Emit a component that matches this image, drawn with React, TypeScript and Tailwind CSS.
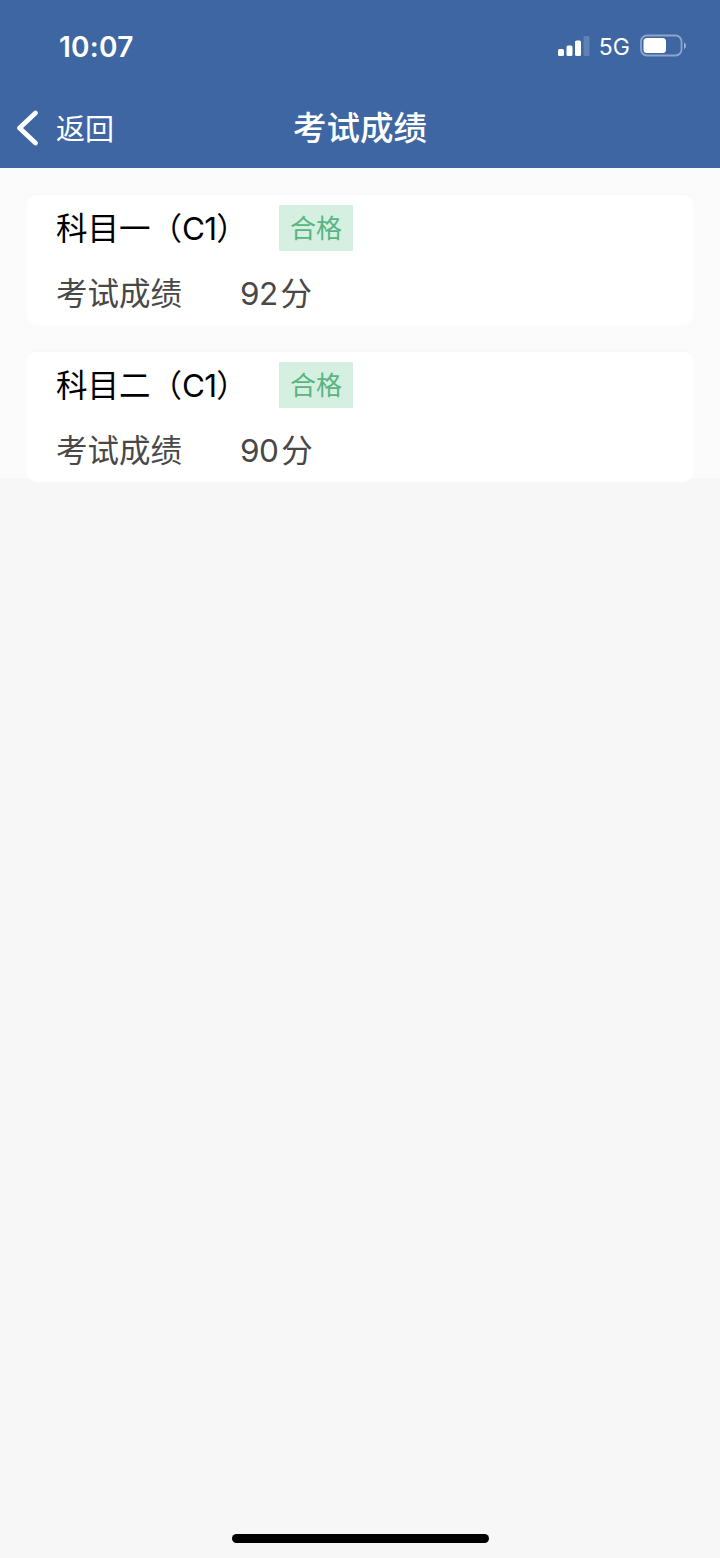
interface ExamResult {
  subject: string;
  license: string;
  score: number;
  status: string;
}

const results: ExamResult[] = [
  { subject: "科目一", license: "C1", score: 92, status: "合格" },
  { subject: "科目二", license: "C1", score: 90, status: "合格" },
];

const StatusBar = () => (
  <div className="flex h-[92px] items-center justify-between pl-[59px] pr-[33px] text-white">
    <div className="pt-px text-[28px] leading-none font-semibold tracking-[0.25px]">
      10:07
    </div>
    <div className="flex items-center">
      <svg
        className="overflow-visible"
        width="32"
        height="20"
        viewBox="0 0 32 20"
        fill="currentColor"
      >
        <rect x="1" y="13" width="6" height="7" rx="1.5" />
        <rect x="9.5" y="9.5" width="6" height="10.5" rx="1.5" />
        <rect x="18" y="4.5" width="6" height="15.5" rx="1.5" />
        <rect x="26.5" y="0" width="6" height="20" rx="1.5" opacity="0.18" />
      </svg>
      <div className="ml-[10px] pt-[2px] text-[23px] leading-none">5G</div>
      <svg
        className="ml-[10px]"
        width="47"
        height="24"
        viewBox="0 0 47 24"
        fill="none"
      >
        <rect
          x="1"
          y="1.5"
          width="40.5"
          height="20"
          rx="6"
          stroke="white"
          strokeOpacity="0.42"
          strokeWidth="1.8"
        />
        <rect x="3.5" y="4" width="22.5" height="15" rx="3.5" fill="white" />
        <path d="M44 8.5c2.6 1 2.6 5.5 0 6.5z" fill="white" fillOpacity="0.5" />
      </svg>
    </div>
  </div>
);

const NavBar = () => (
  <div className="grid h-[76px] grid-cols-3 items-start text-white">
    <button className="flex h-[71px] items-center pl-[15px]">
      <svg width="25" height="38" viewBox="0 0 25 38" fill="none">
        <path
          d="M20.5 4L4.5 19L20.5 34"
          stroke="currentColor"
          strokeWidth="4.8"
          strokeLinecap="round"
          strokeLinejoin="round"
        />
      </svg>
      <span className="ml-4 pt-[3px] text-[29px] leading-none font-normal">
        返回
      </span>
    </button>
    <h1 className="text-center text-[33.5px] leading-[72px] font-medium">
      考试成绩
    </h1>
  </div>
);

const ResultCard = ({ subject, license, score, status }: ExamResult) => (
  <div className="h-[132px] shrink-0 rounded-[10px] border-t-2 border-[#f8f8f8] bg-white pt-[10px] pl-[29px]">
    <div className="flex h-[46px] items-center">
      <div className="w-[223px] pt-[2px] text-[31.5px] leading-none whitespace-nowrap text-black">
        {subject}（<span className="tracking-[-0.8px]">{license}</span>）
      </div>
      <div className="flex h-[46px] w-[74px] items-center justify-center bg-[#d5f0e1] pt-px text-[26px] leading-none text-[#58b480]">
        {status}
      </div>
    </div>
    <div className="mt-[19px] flex h-[46px] items-center pt-[2px] text-[31.5px] leading-none text-[#484848]">
      <div className="w-[184px]">考试成绩</div>
      <div className="tracking-[-0.6px]">{score}</div>
      <div className="ml-[3px]">分</div>
    </div>
  </div>
);

export default function App() {
  return (
    <div className="flex h-[1558px] w-[720px] flex-col bg-[#f7f7f7] font-['Inter','Noto_Sans_CJK_SC',sans-serif]">
      <header className="h-[168px] bg-[#3e66a3]">
        <StatusBar />
        <NavBar />
      </header>
      <main className="flex h-[310px] flex-col gap-[25px] bg-[#fbfbfb] px-[27px] pt-[25px]">
        {results.map((item) => (
          <ResultCard key={item.subject} {...item} />
        ))}
      </main>
      <div className="mx-auto mt-auto mb-[15px] h-[9px] w-[257px] rounded-full bg-black" />
    </div>
  );
}
